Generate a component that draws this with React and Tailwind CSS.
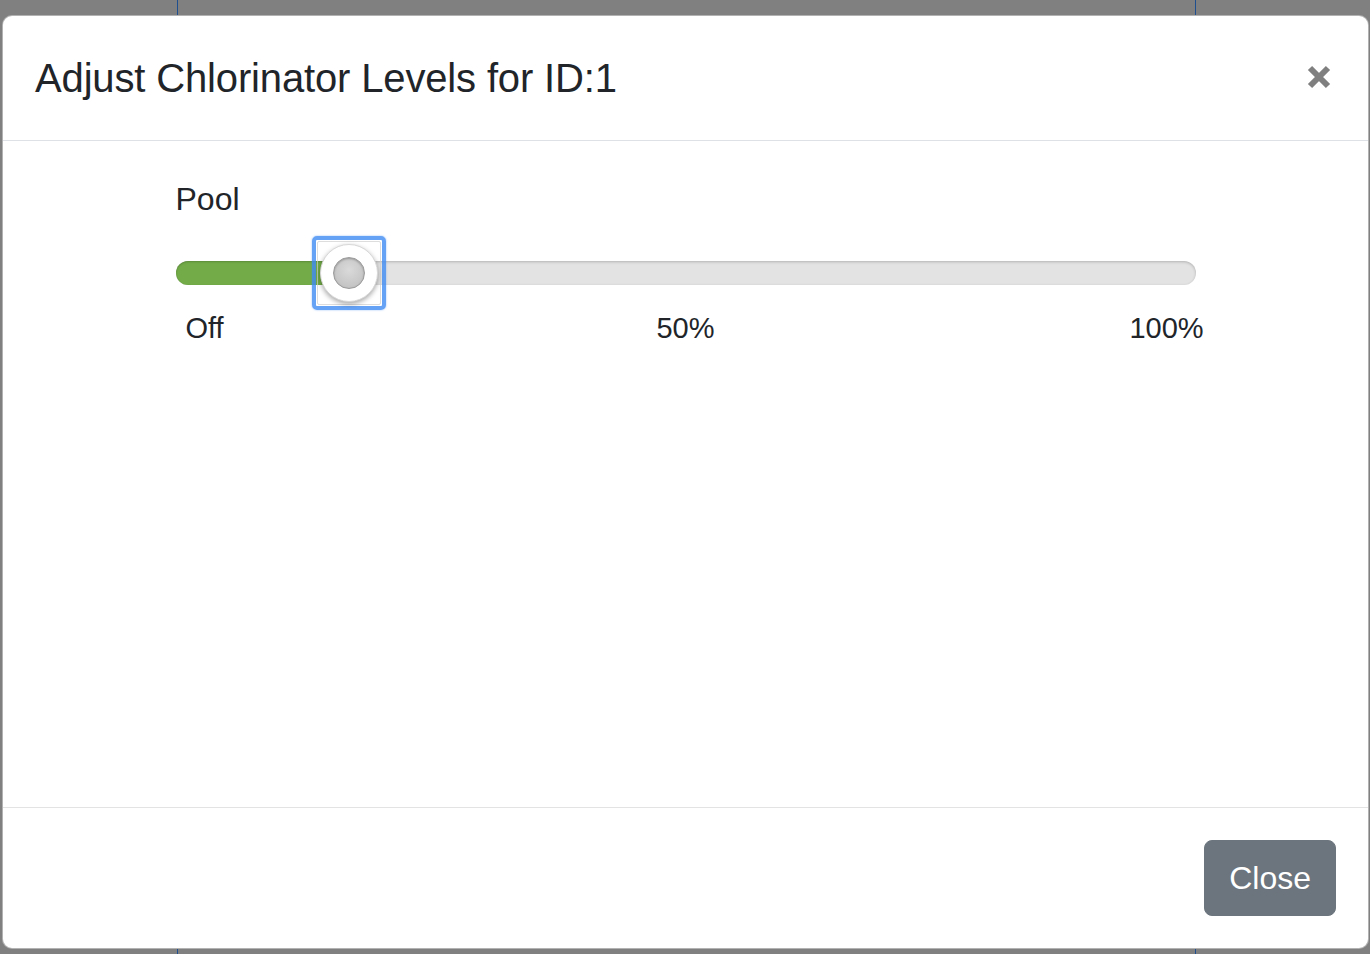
import React from "react";

const FONT = { fontFamily: '"Liberation Sans", Arial, sans-serif' };

function Slider({ value }) {
  const pos = `calc(29px + ${value / 100} * (100% - 58px))`;
  return (
    <div className="w-full">
      <div className="relative h-[68px] mt-[13px]">
        <div className="absolute left-0 right-0 top-[25px] h-[24px] rounded-full bg-[#e3e3e3] shadow-[inset_0_1px_3px_rgba(0,0,0,0.22)]" />
        <div
          className="absolute left-0 top-[25px] h-[24px] rounded-l-full bg-[#72ab47] shadow-[inset_0_1px_2px_rgba(0,0,0,0.2)]"
          style={{ width: pos }}
        />
        <div
          className="absolute top-0 -translate-x-1/2 w-[74px] h-[74px]"
          style={{ left: pos }}
        >
          <div className="absolute inset-0 rounded-[5px] border-[4px] border-[#3f8bf3]/80 shadow-[0_0_2px_rgba(63,139,243,0.6)]" />
          <div className="absolute inset-[5px] border border-[#cfcfcf]/70 rounded-[2px]" />
          <div className="absolute left-[8px] top-[8px] w-[58px] h-[58px] rounded-full bg-white border border-[#d8d8d8] shadow-[0_2px_5px_rgba(0,0,0,0.35)] flex items-center justify-center">
            <div className="w-[32px] h-[32px] rounded-full border border-[#9a9a9a] bg-[radial-gradient(circle_at_50%_40%,#dadada,#bcbcbc)] shadow-[inset_0_1px_2px_rgba(0,0,0,0.25)]" />
          </div>
        </div>
      </div>
      <div className="mt-[3px] flex justify-between px-[29px] text-[29px] leading-[42px] text-[#212529]">
        <div className="w-0 flex justify-center"><span className="whitespace-nowrap">Off</span></div>
        <div className="w-0 flex justify-center"><span className="whitespace-nowrap">50%</span></div>
        <div className="w-0 flex justify-center"><span className="whitespace-nowrap">100%</span></div>
      </div>
    </div>
  );
}

export default function App() {
  return (
    <div className="relative w-[1370px] h-[954px] overflow-hidden bg-[#808080]" style={FONT}>
      <div className="flex h-full">
        <div className="w-[177px]" />
        <div className="w-px bg-[#1f4f8f]" />
        <div className="w-[1017px]" />
        <div className="w-px bg-[#1f4f8f]" />
        <div className="flex-1" />
      </div>

      <div className="absolute left-[2px] top-[15px] w-[1367px] h-[934px] bg-white border border-black/30 rounded-[10px] flex flex-col">
        <div className="flex items-start justify-between p-[32px] border-b border-[#dee2e6]">
          <h5 className="text-[40px] leading-[60px] tracking-[-0.15px] text-[#212529] font-normal">
            Adjust Chlorinator Levels for ID:1
          </h5>
          <button className="mt-[14px] mr-[2px] w-[30px] h-[30px] flex items-center justify-center">
            <svg width="26" height="26" viewBox="0 0 26 26">
              <path d="M4 4 L22 22 M22 4 L4 22" stroke="#7f7f7f" strokeWidth="6" strokeLinecap="butt" />
            </svg>
          </button>
        </div>

        <div className="flex-1 pt-[34px] px-[32px] pb-[32px]">
          <div className="w-[1020px] mx-auto">
            <div className="text-[32px] leading-[48px] text-[#212529]">Pool</div>
            <Slider value={15} />
          </div>
        </div>

        <div className="flex justify-end p-[32px] border-t border-[#e3e3e3]">
          <button className="h-[76px] px-[24px] rounded-[8px] bg-[#6c757d] border border-[#6c757d] text-white text-[32px] leading-[48px]">
            Close
          </button>
        </div>
      </div>
    </div>
  );
}
